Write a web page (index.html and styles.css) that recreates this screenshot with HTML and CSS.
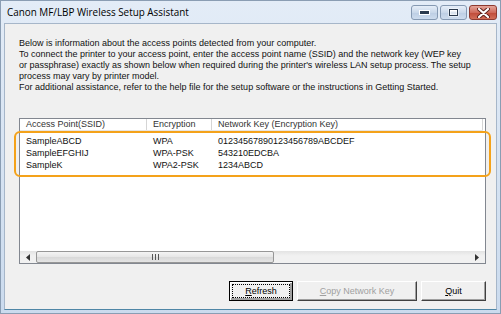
FILE: index.html
```html
<!DOCTYPE html>
<html>
<head>
<meta charset="UTF-8">
<title>Canon MF/LBP Wireless Setup Assistant</title>
<link rel="stylesheet" href="styles.css">
</head>
<body>
  <div class="window">
    <div class="titlebar">
      <span class="title">Canon MF/LBP Wireless Setup Assistant</span>
      <div class="caption-buttons">
        <div class="cap-btn">
          <svg width="11" height="5" viewBox="0 0 11 5"><rect x="0.5" y="0.5" width="10" height="4" fill="#2b3a4d" stroke="#ffffff" stroke-width="1"/></svg>
        </div>
        <div class="cap-btn">
          <svg width="11" height="9" viewBox="0 0 11 9"><rect x="0.5" y="0.5" width="10" height="8" fill="#ffffff"/><rect x="1.5" y="1.5" width="8" height="6" fill="none" stroke="#2b3a4d" stroke-width="1"/><rect x="2.5" y="3.5" width="6" height="3" fill="#dbe4ee"/></svg>
        </div>
        <div class="cap-btn close">
          <svg width="13" height="10" viewBox="0 0 13 10"><path d="M2 1 L11 9 M11 1 L2 9" stroke="#5a1f1a" stroke-width="4" stroke-linecap="round"/><path d="M2 1 L11 9 M11 1 L2 9" stroke="#ffffff" stroke-width="2.2" stroke-linecap="round"/></svg>
        </div>
      </div>
    </div>

    <div class="client">
      <p class="intro">
        Below is information about the access points detected from your computer.<br>
        To connect the printer to your access point, enter the access point name (SSID) and the network key (WEP key<br>
        or passphrase) exactly as shown below when required during the printer's wireless LAN setup process. The setup<br>
        process may vary by printer model.<br>
        For additional assistance, refer to the help file for the setup software or the instructions in Getting Started.
      </p>

      <div class="list">
        <div class="list-header">
          <div class="col col-ssid">Access Point(SSID)</div>
          <div class="col col-enc">Encryption</div>
          <div class="col col-key">Network Key (Encryption Key)</div>
        </div>
        <div class="list-body">
          <div class="row">
            <div class="col col-ssid">SampleABCD</div>
            <div class="col col-enc">WPA</div>
            <div class="col col-key">01234567890123456789ABCDEF</div>
          </div>
          <div class="row">
            <div class="col col-ssid">SampleEFGHIJ</div>
            <div class="col col-enc">WPA-PSK</div>
            <div class="col col-key">543210EDCBA</div>
          </div>
          <div class="row">
            <div class="col col-ssid">SampleK</div>
            <div class="col col-enc">WPA2-PSK</div>
            <div class="col col-key">1234ABCD</div>
          </div>
        </div>
        <div class="hscroll">
          <div class="arrow">
            <svg width="4" height="7" viewBox="0 0 4 7"><path d="M4 0 L0 3.5 L4 7 Z" fill="#333"/></svg>
          </div>
          <div class="track">
            <div class="thumb">
              <svg width="7" height="6" viewBox="0 0 7 6"><path d="M0.5 0 V6 M3.5 0 V6 M6.5 0 V6" stroke="#555" stroke-width="1"/></svg>
            </div>
          </div>
          <div class="arrow">
            <svg width="4" height="7" viewBox="0 0 4 7"><path d="M0 0 L4 3.5 L0 7 Z" fill="#333"/></svg>
          </div>
        </div>
      </div>

      <div class="buttons">
        <button class="btn default btn-refresh"><span class="focus"><u>R</u>efresh</span></button>
        <button class="btn btn-copy" disabled><u>C</u>opy Network Key</button>
        <button class="btn btn-quit"><u>Q</u>uit</button>
      </div>
    </div>

    <div class="highlight"></div>
  </div>
</body>
</html>
```

FILE: styles.css
```css
body {
  margin: 0;
  font-family: "Liberation Sans", Arial, sans-serif;
}

.window {
  position: relative;
  width: 501px;
  height: 314px;
  box-sizing: border-box;
  border: 1px solid #8a9db3;
  background: linear-gradient(#e3ecf7, #cbdbee);
  padding: 0 3px 3px 3px;
  display: flex;
  flex-direction: column;
}

.titlebar {
  height: 22px;
  display: flex;
  align-items: flex-start;
}

.title {
  font-family: "Open Sans", "Noto Sans", sans-serif;
  font-size: 9.9px;
  color: #000;
  padding: 4px 0 0 3px;
}

.caption-buttons {
  margin-left: auto;
  margin-top: 4px;
  display: flex;
  gap: 2px;
}

.cap-btn {
  width: 25px;
  height: 13px;
  border: 1px solid #8599b2;
  border-radius: 3px;
  background: linear-gradient(#e6eef8, #c9d8ea 50%, #bccde3 51%, #cddcee);
  display: flex;
  align-items: center;
  justify-content: center;
}

.cap-btn.close {
  width: 26px;
  border-color: #8d3a30;
  background: linear-gradient(#e4a59a, #cf6a5a 50%, #bf4a38 51%, #d16e58);
}

.client {
  flex: 1;
  background: #f0f0f0;
  border: 1px solid #a6b6c9;
  border-bottom-color: #4f86a6;
  padding: 14px 10px 8px 14px;
  display: flex;
  flex-direction: column;
}

.intro {
  margin: 0;
  font-size: 9px;
  line-height: 11px;
  color: #111;
}

.list {
  margin-top: 25px;
  height: 146px;
  box-sizing: border-box;
  border: 1px solid #828790;
  background: #fff;
  display: flex;
  flex-direction: column;
  font-size: 9px;
}

.list-header {
  display: flex;
  height: 11px;
  border-bottom: 1px solid #e5e5e5;
  margin-right: 2px;
  color: #333;
}

.list-header .col {
  border-right: 1px solid #d5d5d5;
  line-height: 11px;
}

.list-header .col-key {
  flex: 1;
}

.col {
  padding-left: 6px;
  box-sizing: border-box;
  white-space: nowrap;
}

.col-ssid {
  width: 127px;
}

.col-enc {
  width: 65px;
}

.list-body {
  flex: 1;
  padding-top: 4px;
}

.row {
  display: flex;
  height: 12px;
  line-height: 12px;
  color: #111;
}

.hscroll {
  height: 12px;
  display: flex;
  background: linear-gradient(#e3e3e3, #f1f1f1 40%, #f1f1f1);
}

.arrow {
  width: 16px;
  display: flex;
  align-items: center;
  justify-content: center;
}

.track {
  flex: 1;
  display: flex;
}

.thumb {
  width: 238px;
  box-sizing: border-box;
  border: 1px solid #979797;
  border-radius: 2px;
  background: linear-gradient(#f4f4f4, #e6e6e6 50%, #d8d8d8 51%, #e4e4e4);
  display: flex;
  align-items: center;
  justify-content: center;
}

.buttons {
  margin-top: auto;
  display: flex;
  justify-content: flex-end;
  gap: 4px;
}

.btn {
  height: 20px;
  padding: 0;
  box-sizing: border-box;
  font-family: "Liberation Sans", Arial, sans-serif;
  font-size: 9px;
  color: #000;
  background: #f0f0f0;
  border: 1px solid;
  border-color: #ffffff #404040 #404040 #ffffff;
  box-shadow: inset -1px -1px #a0a0a0;
}

.btn.default {
  border: 1px solid #000;
  box-shadow: inset 1px 1px #fff, inset -2px -2px #a0a0a0;
  padding: 2px;
}

.btn .focus {
  display: flex;
  align-items: center;
  justify-content: center;
  height: 100%;
  border: 1px dotted #000;
  box-sizing: border-box;
}

.btn-refresh {
  width: 64px;
}

.btn-copy {
  width: 120px;
  color: #a0a0a0;
}

.btn-quit {
  width: 65px;
}

.highlight {
  position: absolute;
  left: 13px;
  top: 130px;
  width: 477px;
  height: 46px;
  box-sizing: border-box;
  border: 2px solid #f4a21a;
  border-radius: 6px;
}
```
